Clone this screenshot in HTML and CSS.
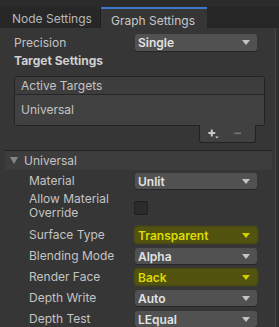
FILE: index.html
```html
<!DOCTYPE html>
<html>
<head>
<meta charset="utf-8">
<link rel="stylesheet" href="styles.css">
</head>
<body>
<div class="win">
  <div class="topstrip"></div>
  <div class="tabbar">
    <div class="tab">Node Settings</div>
    <div class="tab active">Graph Settings</div>
    <div class="tabfill"></div>
  </div>
  <div class="main">
    <div class="content">
      <div class="row top">
        <span class="label">Precision</span>
        <div class="dd"><span>Single</span><svg class="arr" width="8" height="5" viewBox="0 0 8 5"><path d="M0 0H8L4 5Z"/></svg></div>
      </div>
      <div class="section">Target Settings</div>
      <div class="list">
        <div class="list-head">Active Targets</div>
        <div class="list-body">Universal</div>
      </div>
      <div class="list-foot">
        <svg width="57" height="18" viewBox="0 0 57 18">
          <rect x="9.5" y="7" width="7" height="2" fill="#cccccc"/>
          <rect x="12" y="4.5" width="2" height="7" fill="#cccccc"/>
          <path d="M16.5 11.5H20L18.25 13.5Z" fill="#cccccc"/>
          <rect x="36" y="7.5" width="7" height="1.6" fill="#777777"/>
        </svg>
      </div>
      <div class="fold">
        <svg class="tri" width="8" height="7" viewBox="0 0 8 7"><path d="M0 0H8L4 7Z"/></svg>
        <span>Universal</span>
      </div>
      <div class="props">
        <div class="row">
          <span class="label">Material</span>
          <div class="dd"><span>Unlit</span><svg class="arr" width="8" height="5" viewBox="0 0 8 5"><path d="M0 0H8L4 5Z"/></svg></div>
        </div>
        <div class="row tall">
          <span class="label two">Allow Material<br>Override</span>
          <div class="check"></div>
        </div>
        <div class="row">
          <span class="label">Surface Type</span>
          <div class="dd hl"><span>Transparent</span><svg class="arr" width="8" height="5" viewBox="0 0 8 5"><path d="M0 0H8L4 5Z"/></svg></div>
        </div>
        <div class="row">
          <span class="label">Blending Mode</span>
          <div class="dd"><span>Alpha</span><svg class="arr" width="8" height="5" viewBox="0 0 8 5"><path d="M0 0H8L4 5Z"/></svg></div>
        </div>
        <div class="row">
          <span class="label">Render Face</span>
          <div class="dd hl"><span>Back</span><svg class="arr" width="8" height="5" viewBox="0 0 8 5"><path d="M0 0H8L4 5Z"/></svg></div>
        </div>
        <div class="row">
          <span class="label">Depth Write</span>
          <div class="dd"><span>Auto</span><svg class="arr" width="8" height="5" viewBox="0 0 8 5"><path d="M0 0H8L4 5Z"/></svg></div>
        </div>
        <div class="row">
          <span class="label">Depth Test</span>
          <div class="dd"><span>LEqual</span><svg class="arr" width="8" height="5" viewBox="0 0 8 5"><path d="M0 0H8L4 5Z"/></svg></div>
        </div>
      </div>
    </div>
    <div class="scroll"></div>
  </div>
</div>
</body>
</html>
```
FILE: styles.css
```css
* { box-sizing: border-box; }
html, body { margin: 0; padding: 0; }
body {
  width: 279px;
  height: 327px;
  overflow: hidden;
  background: #363636;
  font-family: Inter, "Noto Sans", sans-serif;
  font-size: 12px;
  color: #c4c4c4;
}
.win { display: flex; flex-direction: column; height: 327px; }
.topstrip { height: 7px; background: #2b2b2b; flex: none; }
.tabbar { display: flex; height: 21px; background: #262626; flex: none; }
.tab {
  width: 101px;
  padding: 2px 0 0 12px;
  line-height: 19px;
  background: #272727;
  border-right: 1px solid #1e1e1e;
  color: #b8b8b8;
  white-space: nowrap;
}
.tab.active {
  width: 106px;
  padding-left: 10px;
  background: #363636;
  border-top: 2px solid #3a79c8;
  border-right: none;
  color: #c8c8c8;
}
.tabfill { flex: 1; background: #262626; }
.main { display: flex; flex: 1; }
.content { width: 275px; padding-top: 6px; padding-left: 14px; }
.scroll { flex: 1; background: #2e2e2e; border-left: 1px solid #454545; }
.row { display: flex; align-items: center; height: 16px; margin-bottom: 5px; }
.row.top { height: 17px; margin-bottom: 0; }
.label { width: 121px; flex: none; white-space: nowrap; line-height: 16px; }
.dd {
  width: 122px;
  height: 100%;
  background: #515151;
  border-radius: 3px;
  display: flex;
  align-items: center;
  padding-left: 3px;
  color: #e2e2e2;
  font-weight: 600;
  box-shadow: 0 1px 0 #262626;
}
.dd span { flex: 1; }
.arr { margin-right: 7px; fill: #c4c4c4; }
.dd.hl {
  background: #535310;
  color: #dcdc00;
  box-shadow: 0 0 2px 1px rgba(80, 80, 10, 0.9);
}
.dd.hl .arr { fill: #d0d000; }
.section { height: 17px; line-height: 17px; margin-top: 1px; font-weight: 700; color: #d0d0d0; }
.list {
  margin: 7px 10px 0 0;
  border: 1px solid #232323;
  border-radius: 3px;
  overflow: hidden;
}
.list-head {
  height: 18px;
  line-height: 17px;
  padding-left: 6px;
  background: #3d3d3d;
  border-bottom: 1px solid #262626;
}
.list-body {
  height: 30px;
  line-height: 29px;
  padding-left: 6px;
  background: #414141;
}
.list-foot {
  width: 57px;
  height: 18px;
  margin: -1px 0 0 185px;
  background: #414141;
  border: 1px solid #232323;
  border-top: none;
  border-radius: 0 0 3px 3px;
  display: flex;
}
.list-foot svg { margin-left: -1px; }
.fold {
  margin: 7px 3px 0 -9px;
  height: 20px;
  background: #3d3d3d;
  border-top: 1px solid #232323;
  display: flex;
  align-items: center;
  padding-left: 5px;
}
.tri { fill: #858585; margin-right: 6px; }
.props { padding-top: 3px; padding-left: 15px; }
.props .label { width: 106px; }
.row.tall { height: 28px; margin-top: -2px; margin-bottom: 7px; align-items: flex-start; }
.label.two { line-height: 14px; }
.check {
  width: 14px;
  height: 14px;
  margin-top: 9px;
  margin-left: -1px;
  background: #2b2b2b;
  border: 1px solid #1f1f1f;
  border-radius: 2px;
}
```
